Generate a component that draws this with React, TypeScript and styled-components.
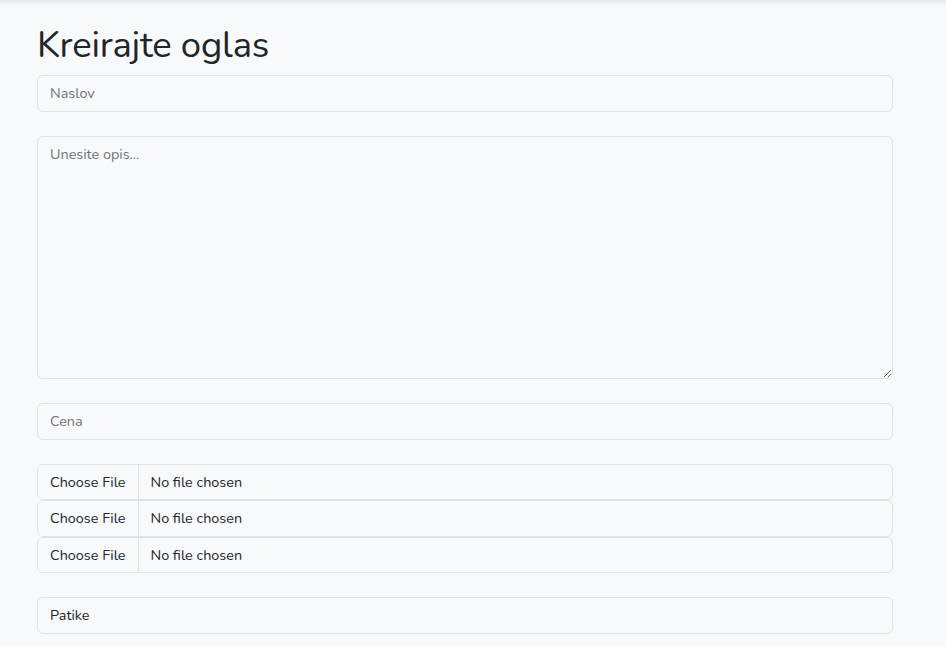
import React from 'react';
import styled, { createGlobalStyle } from 'styled-components';

const GlobalStyle = createGlobalStyle`
    html, body {
        margin: 0;
        padding: 0;
        background: #f8f9fa;
        font-family: "Nunito", "Noto Sans", "Open Sans", sans-serif;
        color: #212529;
    }
`;

// senka navbara iznad
const TopShadow = styled.div`
    height: 6px;
    background: linear-gradient(to bottom, rgba(0, 0, 0, 0.07), rgba(0, 0, 0, 0));
`;

const Page = styled.div`
    min-height: 646px;
    box-sizing: border-box;
`;

const Container = styled.div`
    width: 856px;
    margin-left: 37px;
    padding-top: 18px;
`;

const Title = styled.h1`
    font-size: 36.5px;
    font-weight: 400;
    line-height: 43px;
    margin: 0 0 8px;
    letter-spacing: -0.2px;
`;

const Form = styled.form`
    display: flex;
    flex-direction: column;
`;

const Field = styled.input<{ $gap?: number }>`
    box-sizing: border-box;
    width: 100%;
    height: 36.5px;
    flex-shrink: 0;
    padding: 0 12px;
    margin: 0 0 ${(p) => p.$gap ?? 24}px;
    border: 1px solid #dee2e6;
    border-radius: 6px;
    background: #f8f9fa;
    font-family: inherit;
    font-size: 14.4px;
    color: #212529;
    outline: none;

    &::placeholder {
        color: #6c757d;
    }
`;

const FileField = styled(Field).attrs({ type: 'file' })`
    padding: 0 12px 0 0;
    line-height: 34.5px;

    &::file-selector-button {
        height: 34.5px;
        margin: 0 12px 0 0;
        padding: 0 12px;
        border: 0;
        border-right: 1px solid #dee2e6;
        border-radius: 0;
        background: #f8f9fa;
        color: #212529;
        font-family: inherit;
        font-size: 14.4px;
    }
`;

const TextArea = styled.textarea`
    box-sizing: border-box;
    width: 100%;
    height: 243.5px;
    flex-shrink: 0;
    padding: 7px 12px;
    margin: 0 0 24px;
    border: 1px solid #dee2e6;
    border-radius: 6px;
    background: #f8f9fa;
    font-family: inherit;
    font-size: 14.4px;
    line-height: 1.5;
    color: #212529;
    resize: vertical;
    outline: none;

    &::placeholder {
        color: #6c757d;
    }
`;

const App = () => {
    return (
        <Page>
            <GlobalStyle />
            <TopShadow />
            <Container>
                <Title>Kreirajte oglas</Title>
                <Form onSubmit={(e) => e.preventDefault()}>
                    <Field type="text" placeholder="Naslov" />
                    <TextArea placeholder="Unesite opis..." />
                    <Field type="text" placeholder="Cena" />
                    <FileField $gap={0} />
                    <FileField $gap={0} />
                    <FileField />
                    <Field type="text" defaultValue="Patike" />
                </Form>
            </Container>
        </Page>
    );
};

export default App;
